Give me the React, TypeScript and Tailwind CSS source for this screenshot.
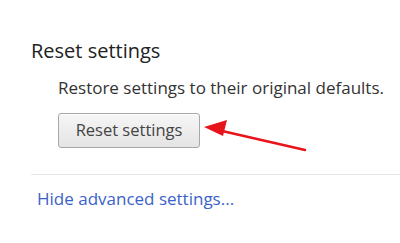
export default function App() {
  return (
    <div className="relative w-[400px] h-[243px] bg-white overflow-hidden font-['Open_Sans',sans-serif]">
      <div className="pt-[37px] pl-[31px]">
        <h3 className="text-[20px] leading-[28px] text-[#222]">Reset settings</h3>
        <div className="pl-[27px] pt-[11px]">
          <p className="text-[17px] leading-[24px] text-[#333]">Restore settings to their original defaults.</p>
          <button className="mt-[13px] w-[142px] h-[35px] rounded-[3px] border border-[#a8a8a8] bg-gradient-to-b from-[#f6f6f6] to-[#e4e4e4] text-[16.5px] text-[#444] shadow-[inset_0_1px_0_#fff]">
            Reset settings
          </button>
        </div>
      </div>
      <div className="mt-[26px] ml-[31px] border-t border-[#e8e8e8]" />
      <div className="pl-[37px] pt-[12px]">
        <a className="text-[17px] leading-[24px] text-[#3a62c8]">Hide advanced settings...</a>
      </div>

      {/* red arrow pointing at the button */}
      <svg className="absolute left-0 top-0" width="400" height="243">
        <line x1="220" y1="130.5" x2="305" y2="150" stroke="#e8141b" strokeWidth="2.5" strokeLinecap="round" />
        <polygon points="204,127 227,120 223,136" fill="#e8141b" />
      </svg>
    </div>
  )
}
